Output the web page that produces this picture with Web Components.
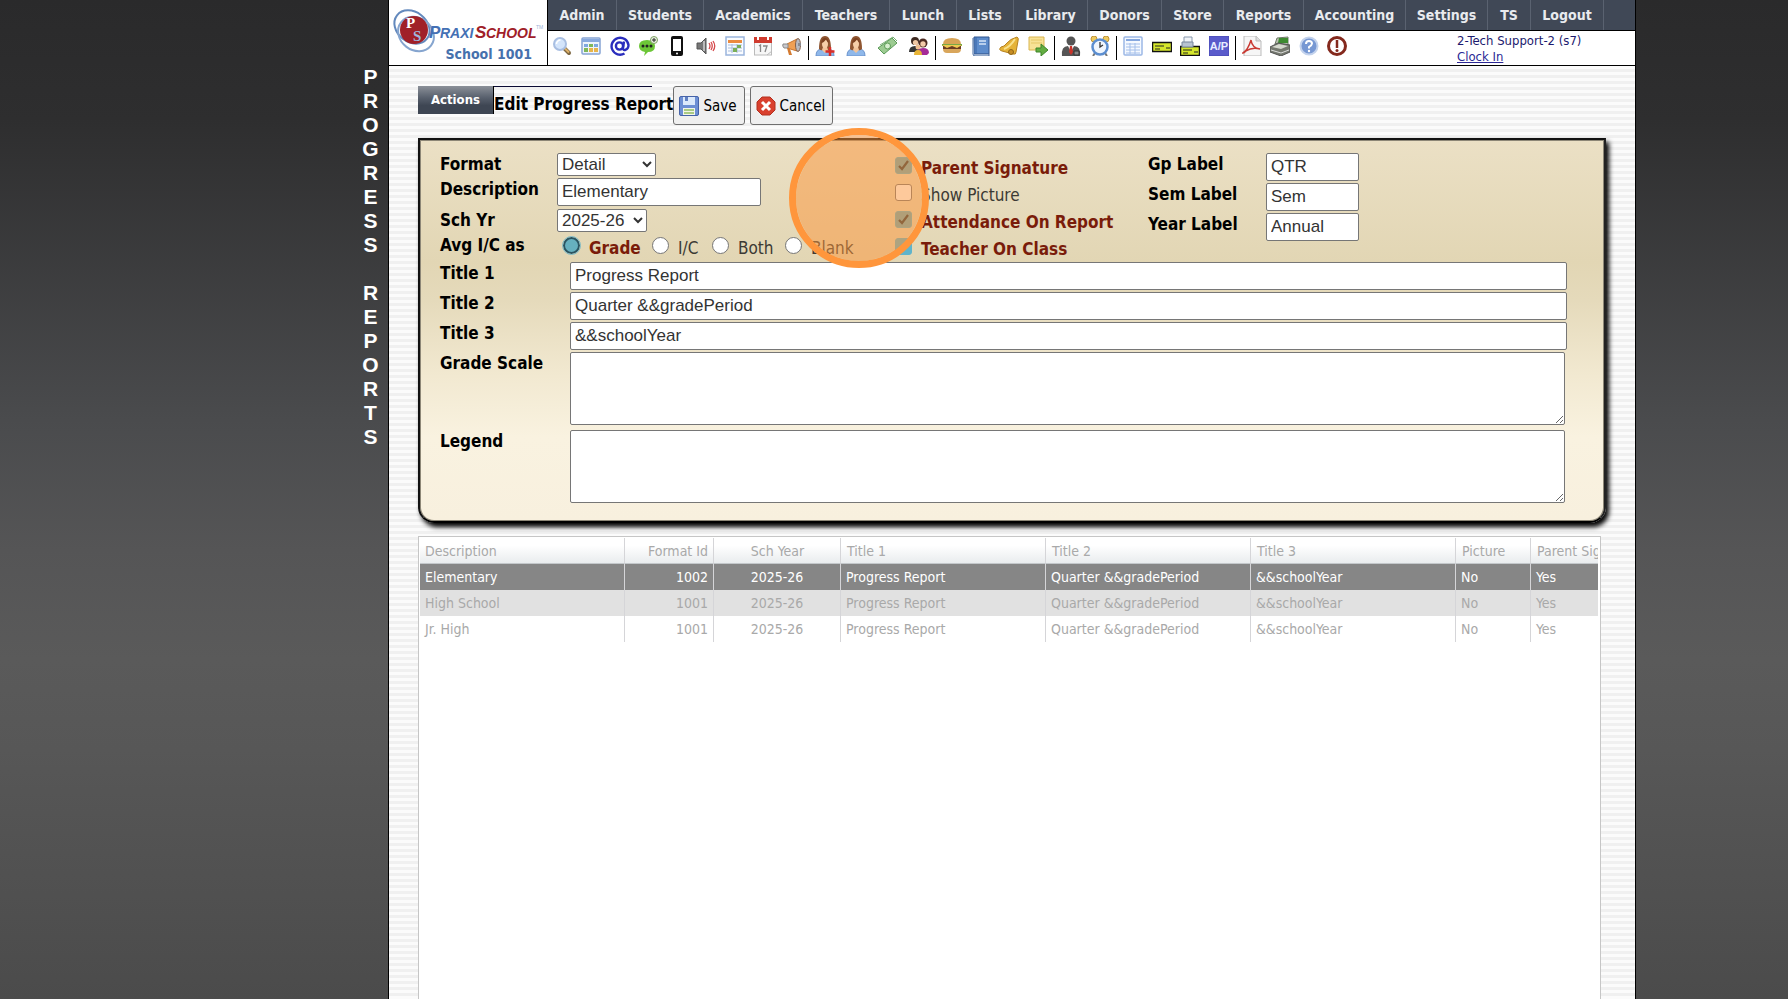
<!DOCTYPE html>
<html lang="en">
<head>
<meta charset="utf-8">
<title>PraxiSchool - Progress Reports</title>
<style>
html{height:100%}
body{margin:0;min-height:100%;font-family:"DejaVu Sans Condensed","DejaVu Sans",Tahoma,sans-serif;font-size:14px;background:linear-gradient(#2a2a2b 0,#2e2e2f 12%,#4a4b4d 42%,#555556 55%,#5a5a5a 66%,#575757 75%,#4b4b4b 100%)}
</style>
</head>
<body>
<ps-app></ps-app>
<script>
const sheetFor = (el, html) => {
  const t = document.createElement('template');
  t.innerHTML = html;
  el.attachShadow({mode: 'open'}).appendChild(t.content.cloneNode(true));
};
const define = (name, render) => customElements.define(name, class extends HTMLElement {
  connectedCallback() { if (!this.shadowRoot) sheetFor(this, render(this)); }
});

const woman = '<path d="M1 20q0-7 6-7h6q6 0 6 7z" fill="#8fb8ea" stroke="#6b93cc"/><path d="M4 13Q4 0 10 0t6 13q-2 2-4 1H8q-2 1-4-1z" fill="#8f5631"/><path d="M8 11h4l1 3-3 3-3-3z" fill="#f3c49a"/><ellipse cx="10" cy="8" rx="3" ry="4" fill="#f6cfa8"/><path d="M6 7q3 0 5-4 1 3 3 4-1-5-4-5T6 7z" fill="#7c4221"/>';
const check = '<rect x=".5" y="6.500" width="19" height="9" fill="#d5e62b" stroke="#111" stroke-width="1.500"/><path d="M3 10h9M3 13h5M14 12h4" stroke="#222" stroke-width="1.200"/>';
const icons = {
  search: '<path d="M12 12l5 5" stroke="#7d6640" stroke-width="4" stroke-linecap="round"/><path d="M13 12.500l4 4" stroke="#dfb269" stroke-width="2"/><circle cx="8" cy="8" r="6" fill="#d4e5fb" stroke="#a9bfe2" stroke-width="2"/><path d="M4.500 8a4 4 0 0 1 4-4" stroke="#fff" stroke-width="1.500" fill="none"/>',
  grid: '<rect x="1" y="2" width="18" height="16" rx="1" fill="#eef4fc" stroke="#87a4d4" stroke-width="1.500"/><path d="M1 3h18v3H1z" fill="#88a9de"/><path d="M3 8h4v3H3zM13 8h4v3h-4z" fill="#7ea8e0"/><path d="M8 8h4v3H8zM3 12h4v4H3z" fill="#7eb85b"/><path d="M8 12h4v4H8zM13 12h4v4h-4z" fill="#e7b54c"/>',
  at: '<circle cx="9.500" cy="10" r="3.600" fill="none" stroke="#2a2dbd" stroke-width="2.400"/><path d="M14 5.500l-1 6.500q0 2.500 2 2 3.500-1 3.500-5a8.500 8.500 0 1 0-4 8.500" fill="none" stroke="#2a2dbd" stroke-width="2.400"/>',
  chat: '<path d="M1 10q0-6 8-6t8 6-7 6l-4 4 1-4q-6-1-6-6z" fill="#6cc637"/><circle cx="5" cy="10" r="1.500"/><circle cx="9" cy="10" r="1.500"/><circle cx="13" cy="10" r="1.500"/><circle cx="16" cy="4" r="3.500" fill="#eaf4e1" stroke="#7da063"/><path d="M16 2v4M14 4h4" stroke="#222"/>',
  phone: '<rect x="4" width="12" height="20" rx="2" fill="#111"/><path d="M6 3h8v12H6z" fill="#fff"/><circle cx="10" cy="17.500" r="1" fill="#fff"/>',
  sound: '<path d="M1 7h4l5-5v16l-5-5H1z" fill="#777" stroke="#555"/><path d="M8 5v10" stroke="#bbb" stroke-width="2"/><path d="M13 7q2 3 0 6M17 5q3.500 5 0 10M15 6q2.500 4 0 8" stroke="#d5494c" stroke-width="1.300" fill="none"/>',
  cal: '<rect x="1" y="1" width="18" height="18" fill="#fafcff" stroke="#9bb5dd" stroke-width="1.500"/><path d="M3 4h14v3H3z" fill="#eb8a3e"/><path d="M3 9h14M3 12h14M3 15h14M7 8v9M12 8v9" stroke="#a9bddb"/><path d="M8 12h4v4H8zM12 9h4v3h-4z" fill="#79af57"/>',
  date: '<rect x="1.500" y="2" width="17" height="17" fill="#f7f7f7" stroke="#bbb"/><path d="M1 1h18v6H1z" fill="#cf3b2e"/><path d="M5 0v4M15 0v4" stroke="#fff" stroke-width="2"/><path d="M6 10l1.500-1v7M10 10h4l-2 6" fill="none" stroke="#888" stroke-width="1.300"/><path d="M14 19l5-4" stroke="#bbb"/>',
  horn: '<path d="M5 8l10-5v12l-10-3z" fill="#f0a055" stroke="#c9742d"/><path d="M1 8h5v4H2q-2-2-1-4z" fill="#c8c8cc" stroke="#888"/><path d="M5 12l2 7h3l-2-6z" fill="#d47a30"/><ellipse cx="16" cy="9" rx="2.500" ry="6.500" fill="#b8bac2" stroke="#85604a"/><path d="M16 7h3v3h-3z" fill="#8b8c93"/>',
  womanplus: woman + '<path d="M15 11v9M10.500 15.500h9" stroke="#d92e28" stroke-width="2.500"/>',
  woman,
  money: '<path d="M0 12L14 2l5 5-13 11z" fill="#9ccb91" stroke="#5b9a58"/><path d="M2 9L15 1l4 4" fill="none" stroke="#78b074"/><circle cx="9.500" cy="10" r="3" fill="#d7efcf" stroke="#5d9d56"/>',
  people: '<circle cx="6" cy="5" r="4" fill="#3f2b22"/><circle cx="6.500" cy="6.500" r="2.600" fill="#f0c7a3"/><path d="M0 16q0-6 6-6t6 6z" fill="#343434"/><circle cx="14" cy="7" r="4.500" fill="#4c2b22"/><circle cx="14" cy="8" r="2.700" fill="#f2caa9"/><path d="M8 19q0-7 6-7t6 5l-2 2z" fill="#a52b97"/><circle cx="9" cy="11" r="2.500" fill="#efbd91"/><path d="M5 19q0-5 4-5t4 5z" fill="#e8b537"/>',
  burger: '<path d="M1 8q0-6 9-6t9 6z" fill="#d8a456"/><path d="M0 8h20v2H0z" fill="#79a946"/><path d="M1 10h18v3H1z" fill="#6c3c22"/><path d="M0 9l5 3 5-2 5 2 5-3z" fill="#efc94f"/><path d="M1 13h18q0 4-4 4H5q-4 0-4-4z" fill="#d9a65b"/>',
  book: '<path d="M3 1h15v17H3z" fill="#5d8ccb" stroke="#2f5590"/><path d="M3 18h15v2H4q-2 0-2-2V2" fill="#e6edf6" stroke="#44689e"/><path d="M5 1v17" stroke="#3a65a5"/><path d="M8 5h7M8 8h7" stroke="#d6e5f8" stroke-width="1.500"/>',
  bell: '<path d="M18 1q2 1 1 4l-2 11q0 3-3 2L3 15q-4-1-1-4 3 0 6-4t10-6z" fill="#e5b338" stroke="#b58121"/><path d="M5 13q6-2 11-10" stroke="#f9e28e" stroke-width="2" fill="none"/><circle cx="12" cy="16" r="2.500" fill="#c78d24" stroke="#8e6417"/>',
  send: '<path d="M1 1h15v13H1z" fill="#f8e296" stroke="#d9b550"/><path d="M3 4h11M3 7h11" stroke="#e5c766"/><path d="M8 12h5V8l7 6-7 6v-4H8z" fill="#63ad42" stroke="#3f8529"/>',
  person: '<circle cx="10" cy="5" r="4.500" fill="#555"/><path d="M1 20q-1-10 6-10h6q7 0 6 10z" fill="#555"/><path d="M7 10h6l-3 6z" fill="#fff"/><path d="M9 10h2l1 6-2 3-2-3z" fill="#ca3329"/><path d="M13 15h5v4h-5z" fill="#888" stroke="#333"/>',
  clock: '<path d="M5 17l-2 3M15 17l2 3" stroke="#777" stroke-width="2"/><circle cx="4" cy="3" r="3" fill="#edc95f" stroke="#bd9234"/><circle cx="16" cy="3" r="3" fill="#edc95f" stroke="#bd9234"/><circle cx="10" cy="11" r="7.500" fill="#f0f6fd" stroke="#5c8ed0" stroke-width="2.500"/><path d="M10 6v5l3-2" fill="none" stroke="#333" stroke-width="1.300"/>',
  sheet: '<rect x="1" y="1" width="18" height="18" rx="1" fill="#f5f9ff" stroke="#9cb8e6" stroke-width="1.500"/><path d="M3 4h14" stroke="#86a8df" stroke-width="2"/><path d="M3 8h14M3 11h14M3 14h14M3 17h14M7 7v11M12 7v11" stroke="#a4bfea"/>',
  check,
  printcheck: '<g transform="translate(0 4)">' + check + '</g><path d="M4 6V1h8v5" fill="#f1f4f8" stroke="#8898ad"/><path d="M2 6h11v5H2z" fill="#b8c3d0" stroke="#76869b"/>',
  ap: '<path d="M0 0h20v20H0z" fill="#5a5bcb"/><path d="M0 0h20v20H0z" fill="none" stroke="#4648b1"/><text x="10" y="14" text-anchor="middle" font-family="Liberation Sans,sans-serif" font-weight="700" font-size="11" fill="#e8edff">A/P</text>',
  pdf: '<path d="M2 0h12l5 5v15H2z" fill="#f6f6f6" stroke="#bbb"/><path d="M14 0v5h5" fill="#ddd" stroke="#bbb"/><path d="M1 17q5-3 8-13 1 8 9 9-8-2-14 2-2 2-3 2z" fill="none" stroke="#c93a33" stroke-width="1.500"/>',
  register: '<path d="M5 8l2-6 11-1v8z" fill="#b8c2af" stroke="#6f7868"/><path d="M9 2h9v5H8z" fill="#3e8b31"/><path d="M0 11l8-4 12 2v7l-9 4-11-4z" fill="#75796f" stroke="#555"/><path d="M2 11l7-3 9 2-7 3z" fill="#d5d9ce"/><path d="M1 14l10 3 8-3" stroke="#ddd" fill="none"/>',
  help: '<circle cx="10" cy="10" r="8.500" fill="#7798d3" stroke="#c3d2ec" stroke-width="2"/><path d="M7 8q0-3 3-3t3 2.500q0 1.500-3 3.500v1.500" fill="none" stroke="#fff" stroke-width="2"/><circle cx="10" cy="15" r="1.200" fill="#fff"/>',
  alert: '<circle cx="10" cy="10" r="8.500" fill="#fff" stroke="#84291d" stroke-width="3"/><path d="M10 4v8" stroke="#84291d" stroke-width="2.500"/><circle cx="10" cy="14.500" r="1.500" fill="#84291d"/>',
  save: '<rect x=".5" y=".5" width="19" height="19" rx="1.500" fill="#6c8fd4" stroke="#4663a8"/><path d="M4 1h12v8H4z" fill="#dbe9fb"/><path d="M6 1h3v4H6z" fill="#5f7fc0"/><path d="M4 12h12v7H4z" fill="#f3f6ea"/><path d="M5 14h10M5 17h10" stroke="#93bd62" stroke-width="1.500"/>',
  cancel: '<path d="M6 1h8l5 5v8l-5 5H6l-5-5V6z" fill="#d9402e" stroke="#b2301f"/><path d="M6 6l8 8M14 6l-8 8" stroke="#fff" stroke-width="3"/>'
};
define('ps-icon', el => `<style>:host{display:block;width:20px;height:20px;flex:none}svg{display:block;width:100%;height:100%}</style>
<svg viewBox="0 0 20 20" fill="#222" aria-hidden="true">${icons[el.getAttribute('name')]}</svg>`);

define('ps-logo', () => `<style>
:host{display:flex;flex-direction:column;box-sizing:border-box;width:159px;border-right:1px solid #000;background:#fff;padding:8px 4px 0}
svg{display:block;width:152px;height:38px;overflow:visible}
span{color:#4671ad;font-weight:700;font-size:14px;line-height:16px;text-align:right;padding-right:11px}
</style>
<svg viewBox="0 0 152 38" role="img" aria-label="PraxiSchool">
<g fill="none"><ellipse cx="19" cy="19" rx="19" ry="15" transform="rotate(38 19 19)" stroke="#6389bd" stroke-width="2"/><ellipse cx="23" cy="26" rx="19" ry="16" transform="rotate(38 23 26)" stroke="#86a5cf" stroke-width="2"/></g>
<circle cx="21" cy="22" r="14" fill="#a02028"/>
<g font-family="Liberation Serif,serif" font-weight="700" font-size="15"><text x="13" y="20" fill="#fff">P</text><text x="20" y="33" fill="#9fb6de">S</text></g>
<g font-family="Liberation Sans,sans-serif" font-weight="700" font-style="italic"><text x="36" y="30" fill="#4470b4" font-size="17">P</text><text x="47" y="30" fill="#4470b4" font-size="14">RAXI</text><text x="82" y="30" fill="#a02028" font-size="17">S</text><text x="93" y="30" fill="#a02028" font-size="14">CHOOL</text></g>
<text x="143" y="21" fill="#9bb3d8" font-family="Liberation Sans,sans-serif" font-size="5">TM</text>
</svg><span>School 1001</span>`);

define('ps-nav', () => `<style>
:host{display:block;background:#404856;border-bottom:1px solid #000}
nav{display:grid;grid-template-columns:69px 87px 99px 87px 67px 57px 74px 74px 62px 80px 102px 82px 43px 73px;height:30px}
a{color:#e9ebee;text-decoration:none;font-weight:700;font-size:14px;line-height:30px;text-align:center;border-right:1px solid #5a6270}
</style><nav>${'Admin,Students,Academics,Teachers,Lunch,Lists,Library,Donors,Store,Reports,Accounting,Settings,TS,Logout'.split(',').map(n => `<a href="#">${n}</a>`).join('')}</nav>`);

define('ps-toolbar', () => {
  const groups = [[250, 'search grid at chat phone sound cal date horn'], [114, 'womanplus woman money people'], [106, 'burger book bell send'], [49, 'person clock'], [106, 'sheet check printcheck ap'], [105, 'pdf register help alert']];
  return `<style>
:host{display:flex;align-items:flex-start;height:34px;background:#fff;padding-left:4px}
.g{display:flex;justify-content:space-between;padding-top:5px}
i{width:1px;height:24px;background:#000;margin:5px 6px 0}
.u{margin-left:110px;font-size:13px;line-height:16px;padding-top:2px;color:#1c1a6e}
.u a{display:block;color:#2b2795}
</style>${groups.map(([w, g]) => `<div class="g" style="width:${w}px">${g.split(' ').map(n => `<ps-icon name="${n}"></ps-icon>`).join('')}</div>`).join('<i></i>')}
<div class="u">2-Tech Support-2 (s7)<a href="#">Clock In</a></div>`;
});

define('ps-header', () => `<style>
:host{display:flex;border-bottom:1px solid #000;background:#fff}
div{flex:1;min-width:0}
</style><ps-logo></ps-logo><div><ps-nav></ps-nav><ps-toolbar></ps-toolbar></div>`);

define('ps-button', el => `<style>
:host{display:block}
button{display:flex;align-items:center;gap:4px;height:39px;margin:0;padding:0 7px 0 5px;background:#efefef;border:1px solid #6f6f6f;border-radius:3px;font:15px "DejaVu Sans Condensed","DejaVu Sans",Tahoma,sans-serif;color:#000}
</style><button type="button"><ps-icon name="${el.getAttribute('icon')}"></ps-icon><slot></slot></button>`);

define('ps-titlebar', () => `<style>
:host{display:flex;align-items:flex-start}
.act{width:75px;height:28px;padding:0;border:0;background:linear-gradient(#8b9098,#5a626f 40%,#3e4653 70%);color:#fff;font:700 13px/28px "DejaVu Sans Condensed","DejaVu Sans",sans-serif}
.t{position:relative;border-left:1px solid #000;height:28px}
.t::before{content:"";position:absolute;left:0;top:0;width:158px;height:1px;background:#0a0a33}
h1{margin:0;font-size:17px;line-height:37px;white-space:nowrap}
ps-button{margin-right:5px}
</style><button class="act" type="button">Actions</button><div class="t"><h1>Edit Progress Report</h1></div>
<ps-button icon="save">Save</ps-button><ps-button icon="cancel">Cancel</ps-button>`);

define('ps-field', el => {
  const a = n => el.getAttribute(n), k = a('kind') || 'text';
  const c = k === 'select' ? `<select id="c"><option>${a('value')}</option></select>`
    : k === 'area' ? '<textarea id="c"></textarea>'
    : `<input id="c" type="text" value="${(a('value') || '').replace(/&/g, '&amp;')}">`;
  return `<style>
:host{display:grid;grid-template-columns:var(--label,130px) minmax(0,1fr);align-items:start}
label{font-weight:700;font-size:17px;line-height:22px;white-space:nowrap}
input,select,textarea{box-sizing:border-box;margin:0;font:17px "Liberation Sans",Arial,sans-serif;color:#333;background:#fff;border:1px solid #767676;border-radius:2px;display:block}
input{width:var(--w,100%);height:28px;padding:1px 4px}
select{width:var(--w);height:23px;padding:0}
textarea{width:calc(100% - 2px);height:73px;padding:2px 4px}
</style><label for="c">${a('label')}</label>${c}`;
});

define('ps-option', el => {
  const on = el.hasAttribute('checked'), t = el.getAttribute('type');
  return `<style>
:host{display:block}
label{display:flex;align-items:flex-start;font-size:17px;line-height:29px;white-space:nowrap;color:${on ? '#7a1c0a' : '#3c3a34'};font-weight:${on ? 700 : 400}}
input{appearance:none;box-sizing:border-box;flex:none;width:17px;height:17px;margin:3px 9px 0 0;background:#fff;border:1px solid #767676;border-radius:3px}
input[type=radio]{border-radius:50%}
input[type=radio]:checked{border:2px solid #2b5562;background:#66b0bf;outline:1px solid #7cbac6}
input[type=checkbox]:checked{border-color:#5fb4cb;background:#5fb4cb}
:host([marked]) input{background:#66aab8 url("data:image/svg+xml,%3Csvg xmlns='http://www.w3.org/2000/svg' viewBox='0 0 15 15'%3E%3Cpath d='M3 8l3 3 6-8' fill='none' stroke='%23283840' stroke-width='2.200'/%3E%3C/svg%3E") center/15px}
</style><label><input type="${t}" name="o" ${on ? 'checked' : ''}><slot></slot></label>`;
});

define('ps-form', () => `<style>
:host{display:block;position:relative;box-sizing:border-box;border:2px solid #000;border-color:#111 #222 #000 #111;border-radius:0 0 16px 16px;background:linear-gradient(#ebe0c5,#e2d6b4 32%,#e5dabb 42%,#f2e9d1 62%,#f9f2e0 78%,#f8f0de);box-shadow:3px 4px 5px #000,inset 0 0 0 1px #8d8777;padding:13px 37px 18px 20px}
.top{display:grid;grid-template-columns:455px 253px minmax(0,1fr);height:109px}
.left{--label:117px;display:grid;grid-template-rows:25px 31px 25px 28px}
.mid{display:grid;grid-auto-rows:27px;align-content:start;padding-top:1px}
.right{--label:118px;--w:93px;display:grid;grid-auto-rows:30px}
fieldset{border:0;margin:0;padding:0;min-width:0;display:grid;grid-template-columns:123px 89px 60px 73px auto}
legend{float:left;padding:0;font-weight:700;font-size:17px;line-height:22px}
.rows{display:grid;grid-template-rows:30px 30px 30px 78px 73px}
.spot{position:absolute;left:369px;top:-12px;width:140px;height:140px;box-sizing:border-box;border:7px solid #ff963c;border-radius:50%;background:rgba(251,147,56,.5);background-clip:padding-box;pointer-events:none}
</style>
<div class="top"><div class="left">
<ps-field kind="select" label="Format" value="Detail" style="--w:99px"></ps-field>
<ps-field label="Description" value="Elementary" style="--w:204px"></ps-field>
<ps-field kind="select" label="Sch Yr" value="2025-26" style="--w:90px"></ps-field>
<fieldset><legend>Avg I/C as</legend><ps-option type="radio" checked>Grade</ps-option><ps-option type="radio">I/C</ps-option><ps-option type="radio">Both</ps-option><ps-option type="radio">Blank</ps-option></fieldset>
</div><div class="mid">
<ps-option type="checkbox" checked marked>Parent Signature</ps-option><ps-option type="checkbox">Show Picture</ps-option><ps-option type="checkbox" checked marked>Attendance On Report</ps-option><ps-option type="checkbox" checked>Teacher On Class</ps-option>
</div><div class="right">
<ps-field label="Gp Label" value="QTR"></ps-field><ps-field label="Sem Label" value="Sem"></ps-field><ps-field label="Year Label" value="Annual"></ps-field>
</div></div>
<div class="rows">
<ps-field label="Title 1" value="Progress Report"></ps-field>
<ps-field label="Title 2" value="Quarter &amp;&amp;gradePeriod"></ps-field>
<ps-field label="Title 3" value="&amp;&amp;schoolYear"></ps-field>
<ps-field kind="area" label="Grade Scale"></ps-field>
<ps-field kind="area" label="Legend"></ps-field>
</div><div class="spot"></div>`);

define('ps-table', () => {
  const head = ['Description', 'Format Id', 'Sch Year', 'Title 1', 'Title 2', 'Title 3', 'Picture', 'Parent Sig'];
  const rest = ['2025-26', 'Progress Report', 'Quarter &amp;&amp;gradePeriod', '&amp;&amp;schoolYear', 'No', 'Yes'];
  const rows = [['Elementary', '1002'], ['High School', '1001'], ['Jr. High', '1001']].map(r => r.concat(rest));
  return `<style>
:host{display:block;box-sizing:border-box;border:1px solid #c6c6c6;border-bottom:0;background:#fff;overflow:hidden;padding:1px 2px 0 1px}
.clip{overflow:hidden}
table{width:100%;table-layout:fixed;border-collapse:separate;border-spacing:0;font-size:14px;color:#a9a9a9}
th,td{box-sizing:border-box;height:26px;padding:0 5px;font-weight:400;text-align:left;white-space:nowrap;overflow:hidden;border-right:1px solid #d5d5d8}
th{background:linear-gradient(#fff 30%,#e9ecee);border-bottom:1px solid #c3c7ca;padding-left:6px}
th:first-child{padding-left:5px}
th:last-child,td:last-child{border-right:0;padding-right:0}
th:nth-child(2),td:nth-child(2){text-align:right}
th:nth-child(3),td:nth-child(3){text-align:center}
tbody tr:nth-child(1){background:#868686;color:#fff}
tbody tr:nth-child(2){background:#e1e1e1}
</style><div class="clip"><table><colgroup>${[205, 89, 127, 205, 205, 205, 75].map(w => `<col style="width:${w}px">`).join('')}<col></colgroup>
<thead><tr>${head.map(h => `<th scope="col">${h}</th>`).join('')}</tr></thead>
<tbody>${rows.map(r => `<tr>${r.map(c => `<td>${c}</td>`).join('')}</tr>`).join('')}</tbody></table></div>`;
});

define('ps-sidetitle', el => `<style>
:host{display:block;font:700 21px/24px "Liberation Sans",Arial,sans-serif;color:#fff;text-align:center;width:35px;justify-self:end;padding-top:65px}
div{height:24px}
</style>${[...el.getAttribute('text')].map(c => `<div>${c}</div>`).join('')}`);

define('ps-app', () => `<style>
:host{display:grid;grid-template-columns:388px minmax(0,1fr) 152px;min-height:100vh}
main{display:flex;flex-direction:column;border:solid #000;border-width:0 1px;background:repeating-linear-gradient(#fbfbfb 0 3px,#f0f0f0 3px 6px)}
.body{flex:1;display:flex;flex-direction:column;padding:20px 29px 0}
ps-form{margin-top:13px}
ps-table{flex:1;margin:13px 5px 0 0}
</style><ps-sidetitle text="PROGRESS REPORTS"></ps-sidetitle>
<main><ps-header></ps-header><div class="body"><ps-titlebar></ps-titlebar><ps-form></ps-form><ps-table></ps-table></div></main>`);
</script>
</body>
</html>
